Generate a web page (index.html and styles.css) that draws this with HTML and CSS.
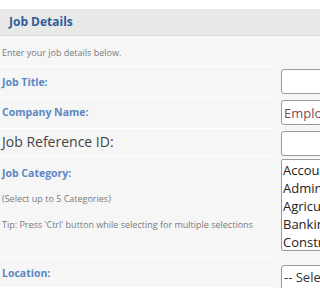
FILE: index.html
```html
<!DOCTYPE html>
<html>
<head>
<meta charset="utf-8">
<link rel="stylesheet" href="styles.css">
</head>
<body>
<div class="page">
  <div class="header">Job Details</div>
  <div class="form">
    <div class="row intro-row">
      <div class="lbl intro">Enter your job details below.</div>
      <div class="fld"></div>
    </div>
    <div class="row r-title">
      <div class="lbl"><span class="label">Job Title:</span></div>
      <div class="fld"><input class="inp" type="text" value=""></div>
    </div>
    <div class="row r-company">
      <div class="lbl"><span class="label">Company Name:</span></div>
      <div class="fld"><input class="inp company" type="text" value="Employer"></div>
    </div>
    <div class="row r-ref">
      <div class="lbl"><span class="ref">Job Reference ID:</span></div>
      <div class="fld"><input class="inp" type="text" value=""></div>
    </div>
    <div class="row r-cat">
      <div class="lbl cat">
        <span class="label">Job Category:</span>
        <span class="note">(Select up to 5 Categories)</span>
        <span class="note">Tip: Press 'Ctrl' button while selecting for multiple selections</span>
      </div>
      <div class="fld">
        <div class="multi">
          <div class="opt">Accounting</div>
          <div class="opt">Administration</div>
          <div class="opt">Agriculture</div>
          <div class="opt">Banking</div>
          <div class="opt">Construction</div>
        </div>
      </div>
    </div>
    <div class="row r-loc">
      <div class="lbl"><span class="label">Location:</span></div>
      <div class="fld"><div class="inp sel">-- Select --</div></div>
    </div>
  </div>
</div>
</body>
</html>
```
FILE: styles.css
```css
html, body {
  margin: 0;
  padding: 0;
  background: #ffffff;
  overflow: hidden;
}
.page {
  padding-top: 9px;
  overflow: hidden;
  font-family: "Open Sans", "DejaVu Sans", sans-serif;
}
.header {
  height: 26px;
  line-height: 26px;
  background: #e8e8e8;
  border-bottom: 1px solid #dcdcdc;
  padding-left: 9px;
  font-size: 12px;
  font-weight: 700;
  color: #2f5d98;
}
.form {
  background: #f6f6f6;
}
.row {
  display: grid;
  grid-template-columns: 273px minmax(0, 1fr);
  column-gap: 8px;
}
.lbl {
  border-bottom: 1px solid #ffffff;
  padding-left: 2px;
  display: flex;
  align-items: center;
  box-sizing: border-box;
}
.fld {
  padding-top: 2px;
  overflow: hidden;
}
.intro-row .lbl { height: 31px; padding-top: 2px; }
.intro {
  font-size: 9px;
  color: #7a7a7a;
}
.r-title .lbl { height: 31px; }
.r-company .lbl { height: 31px; padding-bottom: 3px; }
.r-ref .lbl { height: 28px; padding-bottom: 3px; }
.label {
  font-size: 10.5px;
  font-weight: 700;
  color: #5a88c4;
}
.ref {
  font-size: 14px;
  color: #444444;
}
.inp {
  box-sizing: border-box;
  display: block;
  width: 200px;
  height: 25px;
  margin: 0;
  padding: 0 2px;
  border: 1px solid #9a9a9a;
  border-radius: 3px;
  background: #ffffff;
  font-family: "Open Sans", sans-serif;
  font-size: 13px;
  color: #333;
}
.company { color: #7a4b55; }
.r-cat .lbl {
  flex-direction: column;
  align-items: flex-start;
  justify-content: flex-start;
  padding-top: 9px;
  height: 101px;
}
.r-cat .label { line-height: 14px; }
.note {
  font-size: 9px;
  color: #7a7a7a;
  margin-top: 12px;
  line-height: 14px;
}
.multi {
  box-sizing: border-box;
  width: 200px;
  height: 92px;
  border: 1px solid #9a9a9a;
  border-radius: 2px;
  background: #ffffff;
  padding-top: 1px;
}
.opt {
  font-size: 13px;
  line-height: 18px;
  color: #222;
  padding-left: 1px;
  white-space: nowrap;
}
.r-loc .lbl { height: 30px; }
.r-loc .fld { padding-top: 7px; }
.sel {
  line-height: 23px;
  font-size: 13px;
}
```
